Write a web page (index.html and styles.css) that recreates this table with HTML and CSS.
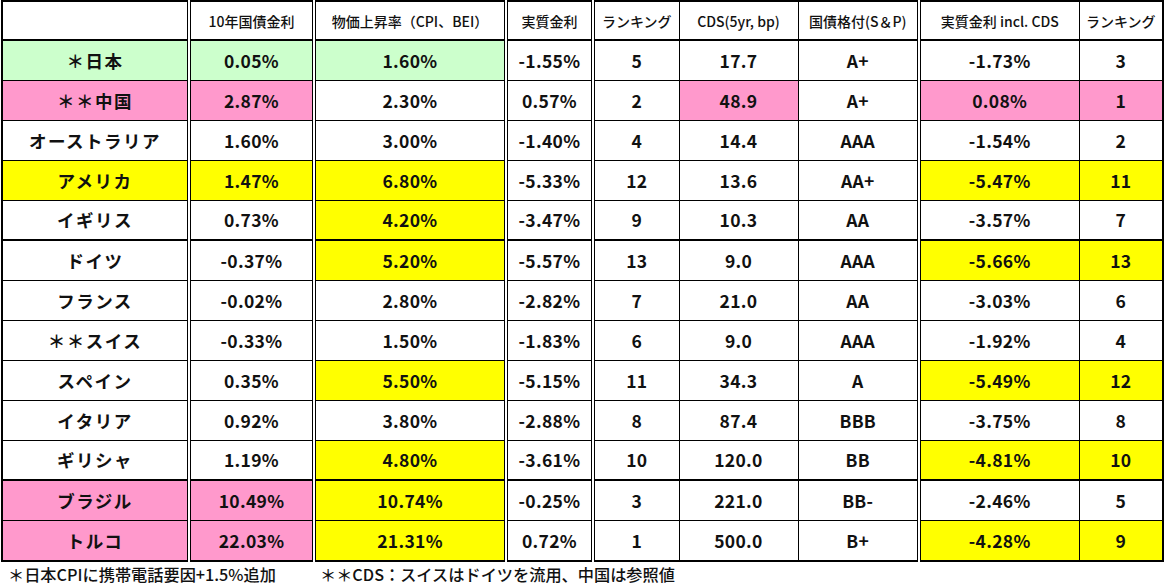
FILE: index.html
```html
<!DOCTYPE html>
<html lang="ja">
<head>
<meta charset="utf-8">
<link rel="stylesheet" href="styles.css">
</head>
<body>
<table class="rates">
  <colgroup>
    <col class="c0"><col class="c1"><col class="c2"><col class="c3"><col class="c4"><col class="c5"><col class="c6"><col class="c7"><col class="c8">
  </colgroup>
  <thead>
    <tr>
      <th></th><th>10年国債金利</th><th>物価上昇率（CPI、BEI）</th><th>実質金利</th><th>ランキング</th><th>CDS(5yr, bp)</th><th>国債格付(S＆P)</th><th>実質金利 incl. CDS</th><th>ランキング</th>
    </tr>
  </thead>
  <tbody>
    <tr><td class="g">＊日本</td><td class="g">0.05%</td><td class="g">1.60%</td><td>-1.55%</td><td>5</td><td>17.7</td><td>A+</td><td>-1.73%</td><td>3</td></tr>
    <tr><td class="p">＊＊中国</td><td class="p">2.87%</td><td>2.30%</td><td>0.57%</td><td>2</td><td class="p">48.9</td><td>A+</td><td class="p">0.08%</td><td class="p">1</td></tr>
    <tr><td>オーストラリア</td><td>1.60%</td><td>3.00%</td><td>-1.40%</td><td>4</td><td>14.4</td><td>AAA</td><td>-1.54%</td><td>2</td></tr>
    <tr><td class="y">アメリカ</td><td class="y">1.47%</td><td class="y">6.80%</td><td>-5.33%</td><td>12</td><td>13.6</td><td>AA+</td><td class="y">-5.47%</td><td class="y">11</td></tr>
    <tr class="sep"><td>イギリス</td><td>0.73%</td><td class="y">4.20%</td><td>-3.47%</td><td>9</td><td>10.3</td><td>AA</td><td>-3.57%</td><td>7</td></tr>
    <tr><td>ドイツ</td><td>-0.37%</td><td class="y">5.20%</td><td>-5.57%</td><td>13</td><td>9.0</td><td>AAA</td><td class="y">-5.66%</td><td class="y">13</td></tr>
    <tr><td>フランス</td><td>-0.02%</td><td>2.80%</td><td>-2.82%</td><td>7</td><td>21.0</td><td>AA</td><td>-3.03%</td><td>6</td></tr>
    <tr><td>＊＊スイス</td><td>-0.33%</td><td>1.50%</td><td>-1.83%</td><td>6</td><td>9.0</td><td>AAA</td><td>-1.92%</td><td>4</td></tr>
    <tr><td>スペイン</td><td>0.35%</td><td class="y">5.50%</td><td>-5.15%</td><td>11</td><td>34.3</td><td>A</td><td class="y">-5.49%</td><td class="y">12</td></tr>
    <tr><td>イタリア</td><td>0.92%</td><td>3.80%</td><td>-2.88%</td><td>8</td><td>87.4</td><td>BBB</td><td>-3.75%</td><td>8</td></tr>
    <tr class="sep"><td>ギリシャ</td><td>1.19%</td><td class="y">4.80%</td><td>-3.61%</td><td>10</td><td>120.0</td><td>BB</td><td class="y">-4.81%</td><td class="y">10</td></tr>
    <tr><td class="p">ブラジル</td><td class="p">10.49%</td><td class="y">10.74%</td><td>-0.25%</td><td>3</td><td>221.0</td><td>BB-</td><td>-2.46%</td><td>5</td></tr>
    <tr><td class="p">トルコ</td><td class="p">22.03%</td><td class="y">21.31%</td><td>0.72%</td><td>1</td><td>500.0</td><td>B+</td><td class="y">-4.28%</td><td class="y">9</td></tr>
  </tbody>
</table>
<div class="notes">
  <span class="note1">＊日本CPIに携帯電話要因+1.5%追加</span>
  <span class="note2">＊＊CDS：スイスはドイツを流用、中国は参照値</span>
</div>
</body>
</html>
```

FILE: styles.css
```css
html, body {
  margin: 0;
  padding: 0;
  background: #ffffff;
}

body {
  font-family: "Noto Sans CJK JP", "Noto Sans", sans-serif;
  color: #111111;
}

.rates {
  border-collapse: collapse;
  table-layout: fixed;
  width: 1163px;
  margin: 0 0 0 1px;
}

.c0 { width: 187px; }
.c1 { width: 125px; }
.c2 { width: 192px; }
.c3 { width: 87px; }
.c4 { width: 86px; }
.c5 { width: 119px; }
.c6 { width: 121px; }
.c7 { width: 160px; }
.c8 { width: 84px; }

.rates th,
.rates td {
  border: 1px solid #000;
  padding: 0;
  text-align: center;
  vertical-align: middle;
  white-space: nowrap;
  overflow: hidden;
}

.rates th {
  font-size: 14px;
  font-weight: 500;
  border-top: 2px solid #000;
  border-bottom: 2px solid #000;
  height: 37px;
}

.rates td {
  height: 38.95px;
  font-size: 17.5px;
  font-weight: 700;
  letter-spacing: 0.3px;
}

.rates tr.sep td { height: 38.35px; }

.rates tr > :nth-child(1) { border-left: 2px solid #000; }
.rates tr > :nth-child(9) { border-right: 2px solid #000; }

.rates tr > :nth-child(1),
.rates tr > :nth-child(2),
.rates tr > :nth-child(3),
.rates tr > :nth-child(4),
.rates tr > :nth-child(7) {
  border-right: 4px double #000;
}

.rates tr.sep td { border-bottom: 2px solid #000; }
.rates tbody tr:last-child td { border-bottom: 2px solid #000; }

.rates td:first-child {
  letter-spacing: 1.5px;
}

.g { background: #ccffcc; }
.p { background: #ff99cc; }
.y { background: #ffff00; }

.notes {
  display: flex;
  height: 24px;
  align-items: center;
  font-size: 16.2px;
  font-weight: 500;
  color: #111;
}

.note1 { margin-left: 8px; width: 312px; }
```
